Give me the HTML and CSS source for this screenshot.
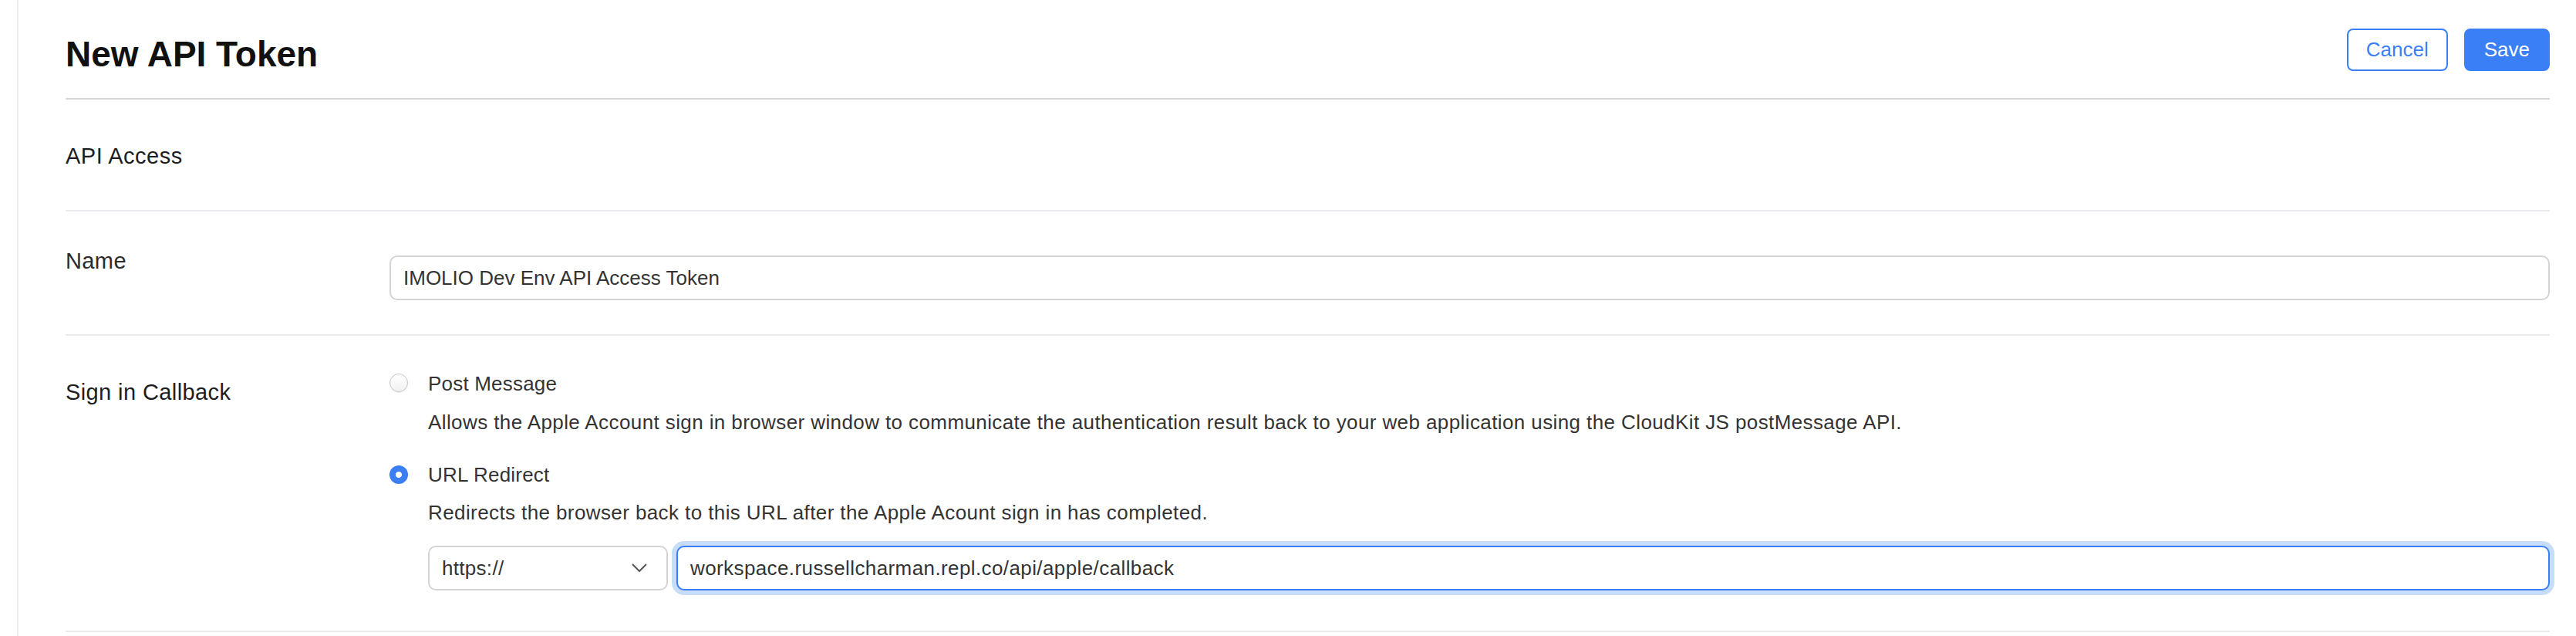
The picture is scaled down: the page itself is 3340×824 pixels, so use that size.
FILE: index.html
```html
<!DOCTYPE html>
<html lang="en">
<head>
<meta charset="utf-8">
<title>New API Token</title>
<link rel="stylesheet" href="styles.css">
</head>
<body>
<div class="page">
  <main class="panel">
    <header class="header">
      <h1 class="title">New API Token</h1>
      <div class="actions">
        <button class="btn btn-outline" type="button">Cancel</button>
        <button class="btn btn-primary" type="button">Save</button>
      </div>
    </header>

    <section class="section-head">API Access</section>

    <div class="row row-name">
      <div class="label">Name</div>
      <input class="field field-name" type="text" value="IMOLIO Dev Env API Access Token">
    </div>

    <div class="row row-callback">
      <div class="label label-strong">Sign in Callback</div>
      <div class="options">
        <div class="option">
          <span class="radio"></span>
          <span class="option-title">Post Message</span>
        </div>
        <p class="desc desc-first">Allows the Apple Account sign in browser window to communicate the authentication result back to your web application using the CloudKit JS postMessage API.</p>
        <div class="option option-second">
          <span class="radio radio-on"></span>
          <span class="option-title">URL Redirect</span>
        </div>
        <p class="desc desc-second">Redirects the browser back to this URL after the Apple Acount sign in has completed.</p>
        <div class="url-row">
          <div class="select">
            <span>https://</span>
            <svg class="chevron" width="20" height="12" viewBox="0 0 20 12" aria-hidden="true"><path d="M1.5 1.5 L10 10 L18.5 1.5" fill="none" stroke="#555" stroke-width="2" stroke-linecap="round" stroke-linejoin="round"/></svg>
          </div>
          <input class="field field-focus" type="text" value="workspace.russellcharman.repl.co/api/apple/callback">
        </div>
      </div>
    </div>
  </main>
</div>
</body>
</html>
```

FILE: styles.css
```css
html, body {
  margin: 0;
  padding: 0;
  background: #fff;
}

body {
  font-family: "Liberation Sans", Arial, sans-serif;
  color: #333;
}

.page {
  padding-left: 22px;
  min-height: 824px;
  box-sizing: border-box;
}

.panel {
  border-left: 2px solid #ededf0;
  padding: 0 34px 0 61px;
  min-height: 824px;
  box-sizing: border-box;
}

/* Header */
.header {
  box-sizing: border-box;
  height: 129px;
  padding-top: 37px;
  border-bottom: 2px solid #d6d6d6;
  display: flex;
  justify-content: space-between;
  align-items: flex-start;
}

.title {
  margin: 6px 0 0;
  font-size: 46px;
  line-height: 55px;
  font-weight: 700;
  color: #111;
}

.actions {
  display: flex;
  gap: 21px;
}

.btn {
  box-sizing: border-box;
  height: 55px;
  padding: 0 23px;
  border: 2px solid #3a7ff6;
  border-radius: 8px;
  font-family: inherit;
  font-size: 26px;
  line-height: 51px;
  cursor: pointer;
}

.btn-outline {
  background: #fff;
  color: #3a7ff6;
}

.btn-primary {
  background: #3a7ff6;
  color: #fff;
  padding: 0 24px;
}

/* Section head */
.section-head {
  box-sizing: border-box;
  height: 145px;
  padding-top: 55px;
  font-size: 29px;
  line-height: 36px;
  letter-spacing: 0.5px;
  color: #1d1d1f;
  border-bottom: 2px solid #ebebef;
}

/* Rows */
.row {
  display: grid;
  grid-template-columns: 420px 1fr;
  align-items: start;
  border-bottom: 2px solid #ebebef;
}

.row-name {
  padding: 46px 0 44px;
}

.row-callback {
  padding: 44px 0 52px;
}

.label {
  font-size: 29px;
  line-height: 36px;
  letter-spacing: 0.4px;
  color: #2b2b2b;
}

.label-strong {
  margin-top: 11px;
  color: #1d1d1f;
}

.field {
  box-sizing: border-box;
  height: 58px;
  width: 100%;
  border: 2px solid #d4d4d4;
  border-radius: 10px;
  padding: 0 16px;
  font-family: inherit;
  font-size: 26px;
  color: #333;
  background: #fff;
  outline: none;
}

.field-name {
  margin-top: 11px;
}

/* Options */
.options {
  display: flex;
  flex-direction: column;
}

.option {
  display: flex;
  align-items: center;
  gap: 26px;
  height: 36px;
}

.option-second {
  margin-top: 32px;
}

.option-title {
  font-size: 26px;
  line-height: 36px;
  letter-spacing: 0.2px;
  color: #333;
}

.radio {
  box-sizing: border-box;
  flex: 0 0 24px;
  width: 24px;
  height: 24px;
  margin-top: -2px;
  border-radius: 50%;
  border: 1px solid #c4c4c4;
  background: linear-gradient(#ffffff, #f1f1f1);
  box-shadow: 0 1px 1px rgba(0, 0, 0, 0.06);
}

.radio-on {
  margin-top: -1px;
  border: none;
  background: radial-gradient(circle at center, #fff 0 3.6px, #3a7ff6 4.4px);
  box-shadow: none;
}

.desc {
  margin: 0 0 0 50px;
  font-size: 26px;
  line-height: 36px;
  letter-spacing: 0.4px;
  color: #333;
}

.desc-first {
  margin-top: 14px;
}

.desc-second {
  margin-top: 13px;
}

.url-row {
  display: flex;
  align-items: center;
  margin: 25px 0 0 50px;
}

.select {
  box-sizing: border-box;
  flex: 0 0 311px;
  height: 58px;
  border: 2px solid #d4d4d4;
  border-radius: 10px;
  padding: 0 25px 0 16px;
  display: flex;
  align-items: center;
  justify-content: space-between;
  font-size: 26px;
  letter-spacing: 0.3px;
  color: #333;
  background: #fff;
}

.chevron {
  display: block;
}

.field-focus {
  flex: 1;
  width: auto;
  margin-left: 11px;
  letter-spacing: 0.4px;
  border-color: #3a7ff6;
  box-shadow: 0 0 0 6px #c6dcf8;
}
```
